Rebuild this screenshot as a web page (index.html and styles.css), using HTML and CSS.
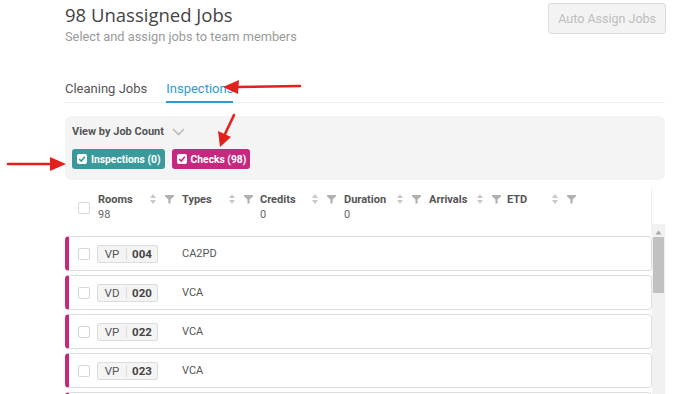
FILE: index.html
```html
<!DOCTYPE html>
<html>
<head>
<meta charset="utf-8">
<link rel="stylesheet" href="styles.css">
</head>
<body>
<div class="page">
  <div class="top">
    <div>
      <h1 class="title">98 Unassigned Jobs</h1>
      <p class="subtitle">Select and assign jobs to team members</p>
    </div>
    <button class="auto-btn">Auto Assign Jobs</button>
  </div>

  <div class="tabs">
    <span class="tab">Cleaning Jobs</span>
    <span class="tab active">Inspections</span>
  </div>

  <div class="filter-box">
    <div class="view-by">View by Job Count
      <svg class="chev" width="13" height="8" viewBox="0 0 13 8"><path d="M1 1 L6.5 6.5 L12 1" fill="none" stroke="#bbb" stroke-width="1.6"/></svg>
    </div>
    <div class="chips">
      <span class="chip teal"><span class="chip-box"><svg width="8" height="8" viewBox="0 0 8 8"><path d="M1.2 4 L3.2 6 L6.8 1.8" fill="none" stroke="#3a9a9a" stroke-width="1.6"/></svg></span>Inspections (0)</span>
      <span class="chip pink"><span class="chip-box"><svg width="8" height="8" viewBox="0 0 8 8"><path d="M1.2 4 L3.2 6 L6.8 1.8" fill="none" stroke="#c7287f" stroke-width="1.6"/></svg></span>Checks (98)</span>
    </div>
  </div>

  <div class="table-head">
    <span class="cb"></span>
    <div class="col c1"><div class="lbl"><b>Rooms</b><i class="sort"></i><i class="filt"></i></div><div class="sub">98</div></div>
    <div class="col c2"><div class="lbl"><b>Types</b><i class="sort"></i><i class="filt"></i></div><div class="sub">&nbsp;</div></div>
    <div class="col c3"><div class="lbl"><b>Credits</b><i class="sort"></i><i class="filt"></i></div><div class="sub">0</div></div>
    <div class="col c4"><div class="lbl"><b>Duration</b><i class="sort"></i><i class="filt"></i></div><div class="sub">0</div></div>
    <div class="col c5"><div class="lbl"><b>Arrivals</b><i class="sort"></i><i class="filt"></i></div><div class="sub">&nbsp;</div></div>
    <div class="col c6"><div class="lbl"><b>ETD</b><i class="sort"></i><i class="filt"></i></div><div class="sub">&nbsp;</div></div>
  </div>

  <div class="list-wrap">
    <div class="rows">
      <div class="row"><span class="cb"></span><span class="badge"><span class="st">VP</span><span class="rm">004</span></span><span class="type">CA2PD</span></div>
      <div class="row"><span class="cb"></span><span class="badge"><span class="st">VD</span><span class="rm">020</span></span><span class="type">VCA</span></div>
      <div class="row"><span class="cb"></span><span class="badge"><span class="st">VP</span><span class="rm">022</span></span><span class="type">VCA</span></div>
      <div class="row"><span class="cb"></span><span class="badge"><span class="st">VP</span><span class="rm">023</span></span><span class="type">VCA</span></div>
      <div class="row"></div>
    </div>
    <div class="scrollbar">
      <svg class="sb-up" width="7" height="5" viewBox="0 0 7 5"><path d="M3.5 0.5 L6.5 4.5 L0.5 4.5 Z" fill="#a8a8a8"/></svg>
      <div class="sb-thumb"></div>
    </div>
  </div>
</div>

<svg class="annot" width="688" height="394" viewBox="0 0 688 394">
  <g stroke="#e2211c" stroke-width="2.6" fill="#e2211c" stroke-linecap="round">
    <line x1="300" y1="86" x2="236" y2="87"/>
    <path d="M223 87 L239 80 L238 94 Z" stroke="none"/>
    <line x1="8" y1="164" x2="52" y2="164"/>
    <path d="M66 164 L50 157 L50 171 Z" stroke="none"/>
    <line x1="234" y1="115" x2="225" y2="134"/>
    <path d="M220 147 L218 131 L231 137 Z" stroke="none"/>
  </g>
</svg>
</body>
</html>
```

FILE: styles.css
```css
* { box-sizing: border-box; }
html, body { margin: 0; padding: 0; background: #fff; }
body {
  width: 688px;
  height: 394px;
  overflow: hidden;
  position: relative;
  font-family: Roboto, "Liberation Sans", sans-serif;
  color: #555;
}
.page {
  padding: 0 23px 0 65px;
}
.top {
  display: flex;
  justify-content: space-between;
  align-items: flex-start;
  padding-top: 3px;
}
.title {
  margin: 0;
  font-family: "Open Sans", sans-serif;
  font-weight: 400;
  font-size: 18.5px;
  line-height: 24px;
  color: #444;
}
.subtitle {
  margin: 2px 0 0;
  font-size: 12.8px;
  line-height: 16px;
  color: #9a9a9a;
}
.auto-btn {
  height: 31px;
  padding: 0 9px;
  border: 1px solid #dcdcdc;
  border-radius: 3px;
  background: #f3f3f3;
  color: #bdbdbd;
  font-family: Roboto, sans-serif;
  font-size: 12.5px;
  margin-right: -1px;
}
.tabs {
  margin-top: 36px;
  display: flex;
  gap: 19px;
  border-bottom: 1px solid #efefef;
  height: 22px;
}
.tab {
  font-size: 13px;
  line-height: 16px;
  color: #555;
  height: 22px;
}
.tab.active {
  color: #2a9bd1;
  border-bottom: 2px solid #2a9bd1;
}
.filter-box {
  margin-top: 13px;
  height: 64px;
  background: #f4f4f4;
  border-radius: 6px;
  padding: 8px 7px 0;
}
.view-by {
  font-size: 11px;
  font-weight: 700;
  color: #555;
  line-height: 16px;
  display: flex;
  align-items: center;
  gap: 8px;
}
.chips {
  display: flex;
  gap: 7px;
  margin-top: 9px;
}
.chip {
  display: inline-flex;
  align-items: center;
  height: 20px;
  padding: 0 4px 0 5px;
  border-radius: 3px;
  color: #fff;
  font-size: 10.3px;
  font-weight: 700;
  gap: 4px;
}
.chip.teal { background: #3a9a9b; }
.chip.pink { background: #c7287f; }
.chip-box {
  width: 10px;
  height: 10px;
  background: #fff;
  border-radius: 2px;
  display: inline-flex;
  align-items: center;
  justify-content: center;
}
.table-head {
  margin-top: 7px;
  height: 48px;
  width: 587px;
  display: flex;
  align-items: flex-start;
  padding: 5px 0 0 13px;
  border-right: 1px solid #f0f0f0;
}
.table-head .cb { margin-top: 10px; margin-right: 8px; }
.cb {
  width: 12px;
  height: 12px;
  border: 1px solid #d6d6d6;
  border-radius: 2px;
  background: #fff;
  flex: none;
}
.col { flex: none; }
.c1 { width: 84px; }
.c2 { width: 78px; }
.c3 { width: 84px; }
.c4 { width: 85px; }
.c5 { width: 78px; }
.c6 { width: 70px; }
.lbl {
  display: flex;
  align-items: center;
  height: 14px;
  font-size: 11px;
  color: #555;
}
.lbl b { font-weight: 700; }
.c1 .lbl b { width: 52px; }
.c2 .lbl b { width: 47px; }
.c3 .lbl b { width: 52px; }
.c4 .lbl b { width: 53px; }
.c5 .lbl b { width: 48px; }
.c6 .lbl b { width: 45px; }
.sort {
  width: 7px;
  height: 10px;
  margin-right: 8px;
  position: relative;
}
.sort::before, .sort::after {
  content: "";
  position: absolute;
  left: 0;
  border-left: 3.5px solid transparent;
  border-right: 3.5px solid transparent;
}
.sort::before { top: 0; border-bottom: 4px solid #c8c8c8; }
.sort::after { bottom: 0; border-top: 4px solid #c8c8c8; }
.filt {
  width: 9px;
  height: 9px;
  background: #b0b0b0;
  clip-path: polygon(0 0, 100% 0, 100% 20%, 62% 55%, 62% 100%, 38% 100%, 38% 55%, 0 20%);
}
.sub {
  font-size: 11px;
  color: #666;
  line-height: 14px;
  margin-top: 2px;
}
.list-wrap {
  display: flex;
  margin-top: -11px;
}
.rows {
  width: 588px;
  padding-top: 12px;
}
.row {
  height: 35px;
  margin-bottom: 4px;
  border: 1px solid #dedede;
  border-left: 4px solid #c7287f;
  border-radius: 4px;
  background: #fff;
  display: flex;
  align-items: center;
  padding-left: 9px;
}
.badge {
  display: flex;
  align-items: center;
  height: 18px;
  margin-left: 7px;
  border: 1px solid #dcdcdc;
  border-radius: 2px;
  background: #f4f4f4;
  font-size: 11.5px;
  color: #555;
  width: 61px;
}
.badge .st {
  width: 29px;
  text-align: center;
  border-right: 1px solid #dcdcdc;
  height: 12px;
  line-height: 12px;
}
.badge .rm {
  flex: 1;
  text-align: center;
  font-weight: 700;
  color: #444;
}
.type {
  margin-left: 24px;
  font-size: 11px;
  color: #555;
}
.scrollbar {
  width: 13px;
  height: 170px;
  background: #f1f1f1;
  position: relative;
}
.sb-up {
  display: block;
  margin: 6px auto 0;
}
.sb-thumb {
  width: 11px;
  margin: 2px auto 0;
  height: 56px;
  background: #c1c1c1;
}
.annot {
  position: absolute;
  left: 0;
  top: 0;
  pointer-events: none;
}
```
